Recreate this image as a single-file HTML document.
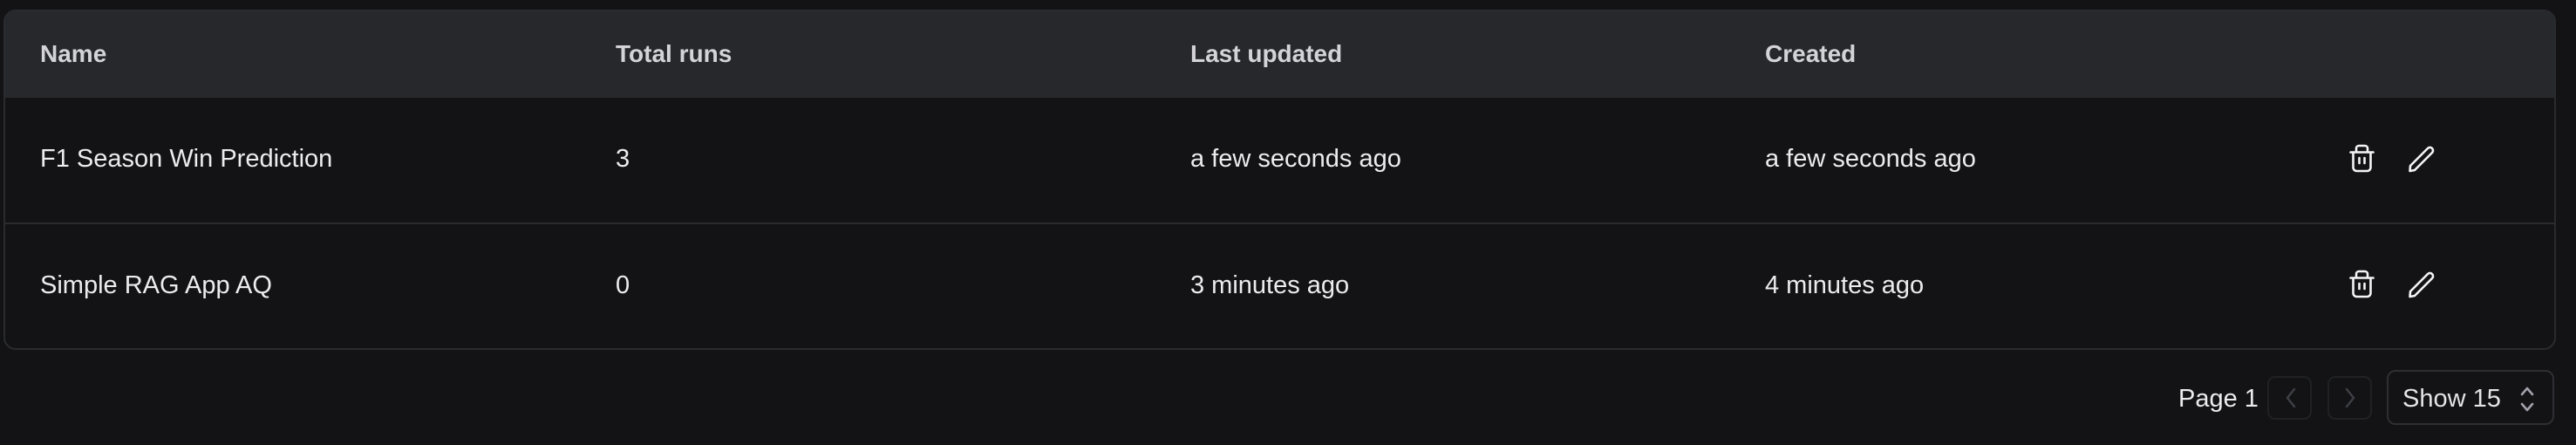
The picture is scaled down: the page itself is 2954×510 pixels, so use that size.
<!DOCTYPE html>
<html><head><style>
html,body{margin:0;padding:0;width:2954px;height:510px;background:#131316;overflow:hidden;font-family:"Liberation Sans",sans-serif;}
.tbl{position:absolute;left:4px;top:11px;width:2923px;height:386px;border:2px solid #2a2b2f;border-radius:14px;overflow:hidden;background:#131316;box-sizing:content-box}
.hdr{position:absolute;left:0;top:0;width:100%;height:99px;background:#27282c}
.div{position:absolute;left:0;top:242px;width:100%;height:2px;background:#2a2b2f}
.t{position:absolute;font-size:28px;white-space:nowrap;line-height:1}
.h{font-weight:bold;color:#d4d4d8;top:35px}
.b{color:#ececef;font-size:29px}
.r1{top:155px}.r2{top:300px}
svg{position:absolute}
.btn{position:absolute;border:2px solid #202125;border-radius:9px;box-sizing:border-box}
</style></head><body>
<div class="tbl">
<div class="hdr"></div>
<div class="div"></div>
<div class="t h" style="left:40px">Name</div>
<div class="t h" style="left:700px">Total runs</div>
<div class="t h" style="left:1359px">Last updated</div>
<div class="t h" style="left:2018px">Created</div>
<div class="t b r1" style="left:40px">F1 Season Win Prediction</div>
<div class="t b r1" style="left:700px">3</div>
<div class="t b r1" style="left:1359px">a few seconds ago</div>
<div class="t b r1" style="left:2018px">a few seconds ago</div>
<div class="t b r2" style="left:40px">Simple RAG App AQ</div>
<div class="t b r2" style="left:700px">0</div>
<div class="t b r2" style="left:1359px">3 minutes ago</div>
<div class="t b r2" style="left:2018px">4 minutes ago</div>
</div>
<svg width="2954" height="510" style="left:0;top:0" fill="none" stroke="#f4f4f5" stroke-width="2.6" stroke-linecap="round" stroke-linejoin="round">
<g id="ic">
<path d="M2695.5 174.5h26M2702 174v-4a3 3 0 0 1 3-3h7a3 3 0 0 1 3 3v4M2698.5 175v17a4 4 0 0 0 4 4h12a4 4 0 0 0 4-4v-17M2705.5 181v6M2711.5 181v6"/>
<path d="M2763.5 196l0.5-6 20-20a3.5 3.5 0 0 1 5 5l-20 20z"/>
</g>
<use href="#ic" y="144"/>
</svg>
<div class="t" style="left:2498px;top:443px;color:#ececef;font-size:29px">Page 1</div>
<div class="btn" style="left:2600px;top:431px;width:51px;height:50px"></div>
<div class="btn" style="left:2669px;top:431px;width:51px;height:50px"></div>
<svg width="2954" height="510" style="left:0;top:0" fill="none" stroke="#3f4046" stroke-width="2.4" stroke-linecap="round" stroke-linejoin="round">
<path d="M2631 446l-8 10 8 10M2691 446l8 10-8 10"/>
</svg>
<div style="position:absolute;left:2737px;top:424px;width:192px;height:63px;border:2px solid #2e2f33;border-radius:10px;box-sizing:border-box"></div>
<div class="t" style="left:2755px;top:443px;color:#e4e4e7;font-size:29px">Show 15</div>
<svg width="2954" height="510" style="left:0;top:0" fill="none" stroke="#a1a1aa" stroke-width="2.6" stroke-linecap="round" stroke-linejoin="round">
<path d="M2892 452l6-7 6 7M2892 463l6 7 6-7"/>
</svg>
</body></html>
